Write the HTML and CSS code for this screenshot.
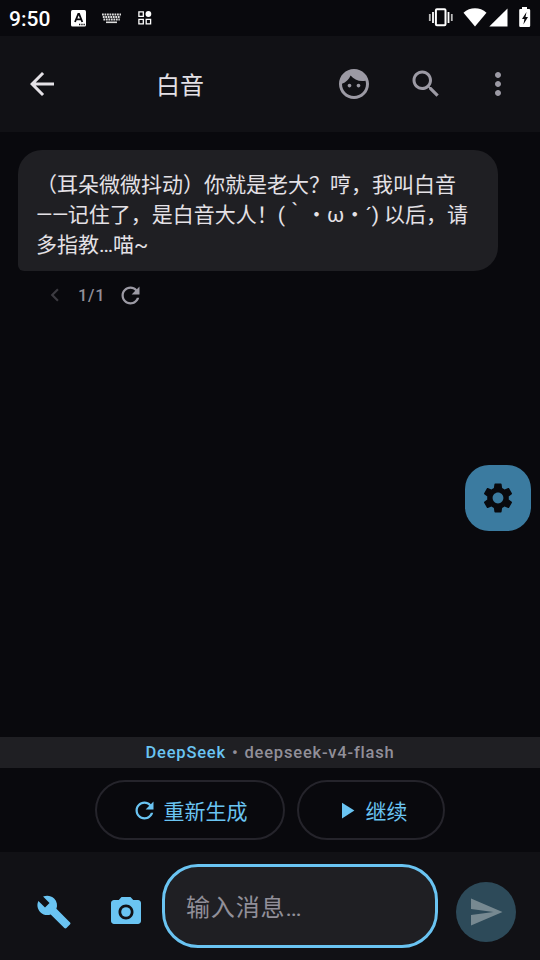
FILE: index.html
```html
<!DOCTYPE html>
<html lang="zh-CN">
<head>
<meta charset="utf-8">
<title>白音</title>
<link rel="stylesheet" href="styles.css">
</head>
<body>
<div class="screen">
  <div class="status">
    <span class="clock">9:50</span>
    <svg class="st-a" width="15" height="17" viewBox="0 0 15 17"><rect width="15" height="16.5" rx="1.5" fill="#fff"/><path d="M4 12 7.3 4h.8l3.2 8M5.1 9.4h5" fill="none" stroke="#09090d" stroke-width="1.8"/><path d="M8 14.500h1.3M10.3 14.500h1.3M12.5 14.500h1.3" stroke="#09090d" stroke-width="1.3"/></svg>
    <svg class="st-k" width="19" height="11" viewBox="0 0 19 11" fill="none" stroke="#ddd"><path d="M0 1.5h19M.8 4h17.6M1.4 6.5h16.4" stroke-width="1.8" stroke-dasharray="1.8 .7"/><path d="M4 9.3h11" stroke-width="1.6"/></svg>
    <svg class="st-g" width="14" height="14" viewBox="0 0 14 14" fill="none" stroke="#fff" stroke-width="1.3"><path d="M.9.9h4.4v4.4H.9zM.9 8.4h4.4v4.4H.9zM8.2 8.4h4.4v4.4H8.2z"/><circle cx="10.4" cy="3" r="2.9" fill="#fff" stroke="none"/></svg>
    <div class="spacer"></div>
    <svg class="st-v" width="26" height="19" viewBox="0 0 26 19" fill="none" stroke="#fff"><rect x="7.9" y="1.3" width="9.6" height="16" rx="1" stroke-width="2"/><path d="M5 4v11M20.500 4v11" stroke-width="1.8"/><path d="M1.800 6v7M23.800 6v7" stroke-width="1.800" stroke="#bbb"/></svg>
    <svg class="st-w" width="24" height="19" viewBox="0 0 24 19"><path d="M.5 4.700C7-1.200 17-1.200 23.500 4.700L12 18.500z" fill="#fff"/></svg>
    <svg class="st-s" width="19" height="19" viewBox="0 0 19 19"><path d="M18.500.5v18H.3z" fill="#fff"/></svg>
    <svg class="st-b" width="12" height="21" viewBox="0 0 12 21"><path d="M3 0h5v2h2q1.200 0 1.200 1.200v15.600q0 1.200-1.200 1.200H1.400Q.2 20 .2 18.800V3.200Q.2 2 1.400 2H3z" fill="#fff"/><path d="M7.500 5 3 12h2.400l-1 5.500L9 10H6.500z" fill="#09090d"/></svg>
  </div>
  <header class="appbar">
    <svg class="ic back" viewBox="0 0 24 24"><path d="M20 11H7.830l5.590-5.590L12 4l-8 8 8 8 1.410-1.410L7.830 13H20v-2z"/></svg>
    <h1>白音</h1>
    <svg class="ic" viewBox="0 0 24 24"><path d="M10.250 13c0 .69-.56 1.250-1.250 1.250S7.750 13.690 7.750 13s.56-1.250 1.250-1.250 1.250.56 1.250 1.250zM15 11.750c-.69 0-1.250.56-1.250 1.250s.56 1.250 1.250 1.250 1.250-.56 1.250-1.250-.56-1.250-1.250-1.250zm7 .25c0 5.520-4.480 10-10 10S2 17.520 2 12 6.480 2 12 2s10 4.480 10 10zm-2 0c0-.78-.12-1.530-.33-2.240-.7.150-1.420.24-2.170.24-3.130 0-5.920-1.440-7.760-3.690C8.690 8.870 6.600 10.880 4 11.860c.01.04 0 .09 0 .14 0 4.420 3.580 8 8 8s8-3.580 8-8z"/></svg>
    <svg class="ic" viewBox="0 0 24 24"><path d="M15.500 14h-.79l-.28-.27C15.410 12.590 16 11.110 16 9.500 16 5.910 13.090 3 9.500 3S3 5.910 3 9.500 5.910 16 9.500 16c1.610 0 3.090-.59 4.230-1.570l.27.28v.79l5 4.990L20.490 19l-4.990-5zm-6 0C7.010 14 5 11.990 5 9.500S7.010 5 9.500 5 14 7.010 14 9.500 11.990 14 9.500 14z"/></svg>
    <svg class="ic" viewBox="0 0 24 24"><path d="M12 8c1.100 0 2-.9 2-2s-.9-2-2-2-2 .9-2 2 .9 2 2 2zm0 2c-1.100 0-2 .9-2 2s.9 2 2 2 2-.9 2-2-.9-2-2-2zm0 6c-1.100 0-2 .9-2 2s.9 2 2 2 2-.9 2-2-.9-2-2-2z"/></svg>
  </header>
  <main class="chat">
    <div class="bubble">（耳朵微微抖动）你就是老大？哼，我叫白音<br><span class="tight">——</span>记住了，是白音大人！(｀・ω・´)<span class="tight"> </span>以后，请<br>多指教…喵~</div>
    <div class="pager">
      <svg class="prev" viewBox="0 0 24 24"><path d="M15.410 7.410 14 6l-6 6 6 6 1.410-1.410L10.830 12z"/></svg>
      <span>1/1</span>
      <svg class="redo" viewBox="0 0 24 24"><path d="M17.650 6.350C16.200 4.900 14.210 4 12 4c-4.420 0-7.990 3.580-7.990 8s3.570 8 7.990 8c3.730 0 6.840-2.550 7.730-6h-2.080c-.82 2.330-3.040 4-5.650 4-3.310 0-6-2.690-6-6s2.690-6 6-6c1.660 0 3.140.69 4.220 1.780L13 11h7V4l-2.350 2.350z"/></svg>
    </div>
    <button class="fab"><svg viewBox="0 0 24 24"><path d="M19.140 12.940c.04-.3.06-.61.06-.94 0-.32-.02-.64-.07-.94l2.030-1.580c.18-.14.23-.41.12-.61l-1.920-3.320c-.12-.22-.37-.29-.59-.22l-2.390.96c-.5-.38-1.030-.7-1.620-.94l-.36-2.540c-.04-.24-.24-.41-.48-.41h-3.840c-.24 0-.43.17-.47.41l-.36 2.540c-.59.24-1.130.57-1.620.94l-2.390-.96c-.22-.08-.47 0-.59.22L2.740 8.870c-.12.21-.08.47.12.61l2.030 1.580c-.05.3-.09.63-.09.94s.02.64.07.94l-2.030 1.580c-.18.14-.23.41-.12.61l1.920 3.320c.12.22.37.29.59.22l2.390-.96c.5.38 1.030.7 1.620.94l.36 2.540c.05.24.24.41.48.41h3.840c.24 0 .44-.17.47-.41l.36-2.540c.59-.24 1.130-.56 1.620-.94l2.390.96c.22.08.47 0 .59-.22l1.920-3.320c.12-.22.07-.47-.12-.61l-2.010-1.580zM12 15.600c-1.980 0-3.600-1.620-3.600-3.600s1.620-3.600 3.600-3.600 3.600 1.620 3.600 3.600-1.620 3.600-3.600 3.600z"/></svg></button>
  </main>
  <div class="model"><b>DeepSeek</b><span class="dot">•</span><span>deepseek-v4-flash</span></div>
  <div class="actions">
    <button class="pill regen"><svg viewBox="0 0 24 24"><path d="M17.650 6.350C16.200 4.900 14.210 4 12 4c-4.420 0-7.990 3.580-7.990 8s3.570 8 7.990 8c3.730 0 6.840-2.550 7.730-6h-2.080c-.82 2.330-3.040 4-5.650 4-3.310 0-6-2.690-6-6s2.690-6 6-6c1.660 0 3.140.69 4.220 1.780L13 11h7V4l-2.350 2.350z"/></svg><span>重新生成</span></button>
    <button class="pill cont"><svg viewBox="0 0 24 24"><path d="M8 5v14l11-7z"/></svg><span>继续</span></button>
  </div>
  <footer class="composer">
    <svg class="tool" viewBox="0 0 24 24"><path d="M22.700 19l-9.100-9.100c.9-2.300.4-5-1.500-6.900-2-2-5-2.400-7.400-1.300L9 6 6 9 1.600 4.700C.4 7.100.9 10.100 2.900 12.100c1.900 1.900 4.600 2.400 6.900 1.500l9.100 9.100c.4.4 1 .4 1.400 0l2.300-2.300c.5-.4.5-1.100.1-1.400z"/></svg>
    <svg class="tool" viewBox="0 0 24 24"><circle cx="12" cy="12" r="3.200"/><path d="M9 2 7.170 4H4c-1.100 0-2 .9-2 2v12c0 1.100.9 2 2 2h16c1.100 0 2-.9 2-2V6c0-1.100-.9-2-2-2h-3.170L15 2H9zm3 15c-2.760 0-5-2.240-5-5s2.240-5 5-5 5 2.240 5 5-2.240 5-5 5z"/></svg>
    <div class="field"><span>输入消息…</span></div>
    <button class="send"><svg viewBox="0 0 24 24"><path d="M2.010 21 23 12 2.010 3 2 10l15 2-15 2z"/></svg></button>
  </footer>
</div>
</body>
</html>
```
FILE: styles.css
```css
* { box-sizing: border-box; }
body {
  margin: 0;
  background: #09090d;
  font-family: Roboto, "Noto Sans CJK SC", sans-serif;
  color: #e4e1e6;
}
svg { display: block; flex: none; }
button { border: 0; padding: 0; margin: 0; font: inherit; background: none; }
.screen { width: 540px; height: 960px; display: flex; flex-direction: column; overflow: hidden; }
.status { height: 36px; flex: none; display: flex; align-items: center; padding: 0 9px 0 9px; }
.clock { color: #fff; font-size: 21px; font-weight: 500; width: 62px; line-height: 36px; padding-top: 2px; }
.st-k { margin-left: 16px; }
.st-g { margin-left: 17px; }
.spacer { flex: 1; }
.st-v, .st-w, .st-s, .st-b { margin-top: -1px; }
.st-w { margin-left: 9px; }
.st-s { margin-left: 2px; }
.st-b { margin-left: 11px; margin-top: -2px; }
.appbar { height: 96px; flex: none; background: #111115; display: flex; align-items: center; gap: 36px; padding: 0 24px; }
.ic { width: 36px; height: 36px; fill: #9c9aa4; }
.back { fill: #e4e1e6; }
h1 { flex: 1; margin: 0 0 0 60px; padding-top: 4px; font-size: 24px; font-weight: 400; line-height: 36px; }
.chat { flex: 1; position: relative; padding: 18px; }
.bubble { width: 480px; height: 121px; background: #1f1f23; border-radius: 24px 24px 24px 6px; padding: 20px 18px 0; font-size: 21px; line-height: 30px; white-space: nowrap; }
.tight { letter-spacing: -.5px; }
.pager { display: flex; align-items: center; height: 24px; margin-top: 12px; padding-left: 24px; font-size: 16.500px; font-weight: 500; letter-spacing: .7px; color: #918f99; }
.prev { width: 26px; height: 26px; fill: #3c3b41; }
.redo { width: 27px; height: 27px; fill: #9c9aa4; }
.pager span { margin: 0 12px 0 10px; }
.fab { position: absolute; right: 9px; top: 333px; width: 66px; height: 66px; border-radius: 24px; background: #3b7ba0; display: grid; place-items: center; }
.fab svg { width: 36px; height: 36px; fill: #09090d; }
.model { height: 31px; flex: none; background: #1f1f23; display: flex; align-items: center; justify-content: center; font-size: 16.500px; font-weight: 500; letter-spacing: .8px; color: #918f99; }
.model b { font-weight: 500; color: #6ac4f2; }
.dot { margin: 0 6px; }
.actions { height: 84px; flex: none; display: flex; justify-content: center; align-items: center; gap: 12px; }
.pill { height: 60px; border: 2px solid #25242b; border-radius: 30px; display: flex; align-items: center; justify-content: center; gap: 6px; padding-right: 2px; font-size: 21px; color: #6ac4f2; }
.pill svg { width: 27px; height: 27px; fill: #6ac4f2; }
.regen { width: 190px; }
.cont { width: 148px; }
.composer { height: 108px; flex: none; background: #111115; display: flex; align-items: flex-start; padding: 12px 24px 0 36px; }
.tool { width: 36px; height: 36px; fill: #6ac4f2; margin: 30px 36px 0 0; }
.field { width: 276px; height: 84px; margin-left: -18px; border: 3px solid #6ac4f2; border-radius: 36px; background: #1f1f23; display: flex; align-items: center; padding: 0 0 2px 21px; font-size: 24px; letter-spacing: .85px; color: #918f99; }
.send { width: 60px; height: 60px; margin: 18px 0 0 18px; border-radius: 50%; background: #2d4a59; display: grid; place-items: center; }
.send svg { width: 36px; height: 36px; fill: #778991; }
```
